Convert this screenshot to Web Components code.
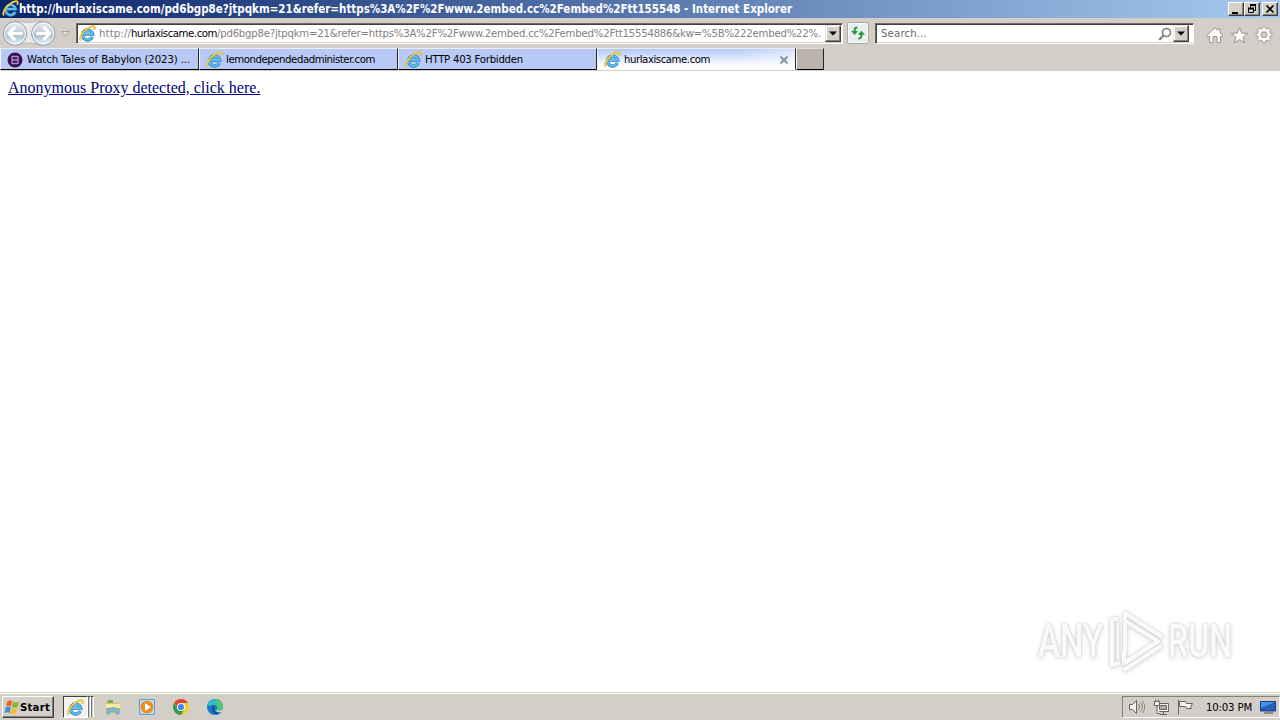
<!DOCTYPE html>
<html lang="en">
<head>
<meta charset="utf-8">
<title>Internet Explorer</title>
<style>
  body { margin: 0; overflow: hidden; }
</style>
</head>
<body>
<browser-desktop></browser-desktop>

<script>
  // Text set to a fixed width, so that labels keep the metrics of the system font
  class FitText extends HTMLElement {
    constructor() {
      super();
      this.attachShadow({ mode: "open" });
      this.shadowRoot.innerHTML = `
        <style>
          :host { display: flex; flex: none; }
          span { flex: none; white-space: pre; }
        </style>
        <span><slot></slot></span>
      `;
    }

    connectedCallback() {
      const width = Number(this.getAttribute("width"));
      const span = this.shadowRoot.querySelector("span");
      const nodes = this.shadowRoot.querySelector("slot").assignedNodes({ flatten: true });
      const text = nodes.map((node) => node.textContent).join("");
      const natural = span.getBoundingClientRect().width;
      const gap = (width - natural) / text.length;
      span.style.letterSpacing = `${gap}px`;
      this.style.width = `${width}px`;
    }
  }

  class IeIcon extends HTMLElement {
    constructor() {
      super();
      this.attachShadow({ mode: "open" });
      this.shadowRoot.innerHTML = `
        <style>
          :host { display: block; width: 17px; height: 17px; flex: none; }
          svg { display: block; width: 100%; height: 100%; }
        </style>
        <svg viewBox="0 0 17 17" fill="none">
          <path d="M13.4 11.8A5.1 5.1 0 1 1 13.700 9.100H5.2" stroke="#2480bd" stroke-width="3.2"/>
          <path d="M13.2 11.8A5 5 0 1 1 13.500 9H5" stroke="#5fbfea" stroke-width="1.900"/>
          <path d="M2.2 15.2C-.7 14 3.7 6.6 8.5 3.5c3-2.2 6.7-3.2 7.2-1.3.2.8-.1 1.7-.6 2.6" stroke="#c89b20" stroke-width="1.900"/>
          <path d="M2.2 15.2C-.7 14 3.7 6.6 8.5 3.5c3-2.2 6.7-3.2 7.2-1.3.2.8-.1 1.7-.6 2.6" stroke="#f7d84b" stroke-width="1.200"/>
        </svg>
      `;
    }
  }

  class WindowButton extends HTMLElement {
    constructor() {
      super();
      this.attachShadow({ mode: "open" });
      this.shadowRoot.innerHTML = `
        <style>
          :host {
            display: flex;
            box-sizing: border-box;
            width: 16px;
            height: 14px;
            align-items: center;
            justify-content: center;
            background: #d4d0c8;
            border: 1px solid;
            border-color: #fff #404040 #404040 #fff;
            box-shadow: inset -1px -1px #808080;
            flex: none;
          }
        </style>
        <slot></slot>
      `;
    }
  }

  class TitleBar extends HTMLElement {
    constructor() {
      super();
      this.attachShadow({ mode: "open" });
      this.shadowRoot.innerHTML = `
        <style>
          :host {
            display: flex;
            box-sizing: border-box;
            height: 18px;
            padding: 0 2px;
            color: #fff;
            font-weight: bold;
            background: linear-gradient(90deg, #0a246a, #a6caf0);
          }
          fit-text { line-height: 18px; font-size: 11.500px; }
          .buttons { display: flex; margin: 2px 0 0 auto; }
          .close { margin-left: 2px; }
          svg { display: block; }
        </style>
        <ie-icon></ie-icon>
        <fit-text width="773"><slot></slot></fit-text>
        <div class="buttons">
          <window-button><svg width="12" height="10"><path d="M2 8h6v2H2z"/></svg></window-button>
          <window-button>
            <svg width="12" height="10" fill="none" stroke="#000"><path d="M4 1h6M4.500 1v3M9.500 1v5.500H8M2 4.500h5.500v4h-5v-4"/><path d="M4 1h6M2 4.500h6" stroke-width="2"/></svg>
          </window-button>
          <window-button class="close"><svg width="12" height="10"><path d="M2.500 1.500l7 7m0-7l-7 7" stroke="#000" stroke-width="1.600"/></svg></window-button>
        </div>
      `;
    }
  }

  class NavButtons extends HTMLElement {
    constructor() {
      super();
      this.attachShadow({ mode: "open" });
      this.shadowRoot.innerHTML = `
        <style>
          :host { display: block; width: 76px; height: 30px; flex: none; }
          svg { display: block; }
        </style>
        <svg width="76" height="30">
          <defs>
            <linearGradient id="glass" x2="0" y2="1">
              <stop offset="0" stop-color="#e8ecf0"/>
              <stop offset=".45" stop-color="#c6d0da"/>
              <stop offset=".55" stop-color="#a9bccb"/>
              <stop offset="1" stop-color="#e4faff"/>
            </linearGradient>
          </defs>
          <path d="M15 3Q29 6 43 3V27Q29 23 15 27z" fill="#ece9e6" stroke="#c0bbb5"/>
          <g fill="url(#glass)" stroke="#8e9caa">
            <circle cx="15" cy="15.500" r="11.700"/>
            <circle cx="43.300" cy="15.500" r="11.700"/>
          </g>
          <g fill="none" stroke="#fff">
            <circle cx="15" cy="15.500" r="10.500"/>
            <circle cx="43.300" cy="15.500" r="10.500"/>
          </g>
          <g fill="none" stroke="#fff" stroke-width="3">
            <path d="M22.500 15.500H9.500M15 9l-6.200 6.500L15 22"/>
            <path d="M36 15.500h13M43.500 9l6.200 6.500-6.200 6.500"/>
          </g>
          <path d="M61.500 13.500h8L65.500 18z" fill="#e2deda" stroke="#aaa5a0"/>
        </svg>
      `;
    }
  }

  class DropButton extends HTMLElement {
    constructor() {
      super();
      this.attachShadow({ mode: "open" });
      this.shadowRoot.innerHTML = `
        <style>
          :host {
            display: flex;
            box-sizing: border-box;
            width: 16px;
            height: 17px;
            align-items: center;
            justify-content: center;
            background: #d4d0c8;
            border: 1px solid;
            border-color: #e8e5e0 #404040 #404040 #e8e5e0;
            box-shadow: inset -1px -1px #808080, inset 1px 1px #fff;
            flex: none;
          }
        </style>
        <svg width="8" height="5"><path d="M0 .500h8L4 4.500z"/></svg>
      `;
    }
  }

  class AddressBar extends HTMLElement {
    constructor() {
      super();
      this.attachShadow({ mode: "open" });
      this.shadowRoot.innerHTML = `
        <style>
          :host {
            display: flex;
            box-sizing: border-box;
            width: 767px;
            height: 21px;
            padding: 0 0 0 2px;
            background: #fff;
            border: 1px solid;
            border-color: #706b68 #fff #fff #706b68;
            box-shadow: inset 1px 1px #404040, inset 0 -1px #d4d0c8;
            color: #85807e;
            flex: none;
          }
          ie-icon { margin: 1px 3px 0 0; }
          fit-text { line-height: 20px; }
          .host { color: #000; }
          drop-button { margin: 1px 1px 0 auto; }
        </style>
        <ie-icon></ie-icon>
        <fit-text width="32">http://</fit-text>
        <fit-text class="host" width="86">hurlaxiscame.com</fit-text>
        <fit-text width="604">/pd6bgp8e?jtpqkm=21&amp;refer=https%3A%2F%2Fwww.2embed.cc%2Fembed%2Ftt15554886&amp;kw=%5B%222embed%22%.</fit-text>
        <drop-button></drop-button>
      `;
    }
  }

  class SearchBox extends HTMLElement {
    constructor() {
      super();
      this.attachShadow({ mode: "open" });
      this.shadowRoot.innerHTML = `
        <style>
          :host {
            display: flex;
            box-sizing: border-box;
            width: 319px;
            height: 21px;
            padding-left: 5px;
            background: #fff;
            border: 1px solid;
            border-color: #706b68 #fff #fff #706b68;
            box-shadow: inset 1px 1px #404040, inset 0 -1px #d4d0c8;
            color: #6c6866;
            flex: none;
          }
          fit-text { line-height: 20px; }
          svg { margin: 3px 0 0 auto; }
          drop-button { margin: 1px 4px 0 0; }
        </style>
        <fit-text width="46">Search...</fit-text>
        <svg width="15" height="15" fill="none" stroke="#85817f">
          <circle cx="8.500" cy="5.500" r="4" stroke-width="1.700"/>
          <path d="M5.500 8.500L1.200 13" stroke-width="2.300"/>
        </svg>
        <drop-button></drop-button>
      `;
    }
  }

  class NavBar extends HTMLElement {
    constructor() {
      super();
      this.attachShadow({ mode: "open" });
      this.shadowRoot.innerHTML = `
        <style>
          :host { display: flex; height: 30px; }
          address-bar, search-box { margin-top: 5px; }
          .refresh {
            display: block;
            box-sizing: border-box;
            width: 22px;
            height: 22px;
            margin: 4px 6px 0 4px;
            background: #e6eef0;
            border: 1px solid #aaa8a4;
            border-radius: 2px;
            box-shadow: inset 0 0 0 1px #f8fafa;
            flex: none;
          }
          .tools { margin: 7px 0 0 11px; flex: none; }
        </style>
        <nav-buttons></nav-buttons>
        <address-bar></address-bar>
        <svg class="refresh" viewBox="0 0 20 20">
          <g fill="#2d9637">
            <path d="M9.500 3.500C6.500 3.500 5.600 5 5.600 8H3l3.700 4 3.300-4H7.600c0-2 .4-2.500 1.900-2.700z"/>
            <path d="M10.200 16.500c3 0 4.200-1.500 4.200-4.700H17l-3.700-4L10 11.800h2.400c0 2-.7 2.700-2.200 2.900z"/>
          </g>
        </svg>
        <search-box></search-box>
        <svg class="tools" width="68" height="22" fill="#fff" stroke="#989491">
          <path d="M1.500 11L10 2.800l2.500 2.400V4h2.600v3.800L18 11l-1.500 1-1-.8v6.300H12v-6H8v6H4.500v-6.300L3 12.200z"/>
          <path d="M34.500 2.500l2.200 5.600 6 .3-4.700 3.800 1.600 5.600-5.100-3.200-5.100 3.200L31 12.200l-4.700-3.800 6-.3z"/>
          <path d="M57.700 2.500h2.600l.6 2.300 1.500.6 2-1.300 1.900 1.900-1.300 2 .6 1.500 2.300.6v2.600l-2.300.6-.6 1.500 1.300 2-1.900 1.900-2-1.300-1.500.6-.6 2.300h-2.600l-.6-2.300-1.500-.6-2 1.300-1.900-1.900 1.300-2-.6-1.500-2.300-.6v-2.600l2.300-.6.6-1.500-1.300-2 1.900-1.900 2 1.300 1.500-.6z" transform="translate(5.900 -.6) scale(.9)"/>
          <circle cx="59" cy="9.700" r="3" fill="#d4cec8"/>
        </svg>
      `;
    }
  }

  class BrowserTab extends HTMLElement {
    constructor() {
      super();
      this.attachShadow({ mode: "open" });
      this.shadowRoot.innerHTML = `
        <style>
          :host {
            display: flex;
            box-sizing: border-box;
            width: 199px;
            height: 22px;
            padding-left: 6px;
            background: #b9c9f5;
            border: 1px solid;
            border-color: #e9eef8 #252525 #000 #f3f5fa;
            flex: none;
          }
          :host([active]) {
            background: linear-gradient(90deg, #fff0 70%, #ffffff80), linear-gradient(#b4c8fa, #fff 85%);
            border-bottom-color: #fff;
          }
          :host([blank]) {
            width: 28px;
            background: #bab2ab;
            border-top-color: #dedad6;
          }
          ::slotted(fit-text) { line-height: 22px; margin-left: 3px; }
          ::slotted(ie-icon) { margin-top: 2px; }
          ::slotted(svg) { display: block; flex: none; }
        </style>
        <slot></slot>
      `;
    }
  }

  class TabStrip extends HTMLElement {
    constructor() {
      super();
      this.attachShadow({ mode: "open" });
      this.shadowRoot.innerHTML = `
        <style>
          :host {
            display: flex;
            box-sizing: border-box;
            height: 23px;
            color: #000;
          }
          .film { margin: 3px 1px 0 0; }
          .x { margin: 6px 0 0 auto; padding-right: 6px; }
        </style>
        <browser-tab>
          <svg class="film" width="16" height="16">
            <circle cx="8" cy="8" r="7.500" fill="#351252"/>
            <path d="M5 4v8M11 4v8M5 8h6M5 4.500h6M5 11.500h6" stroke="#b28bd1" stroke-width="1.300" fill="none"/>
          </svg>
          <fit-text width="163">Watch Tales of Babylon (2023) ...</fit-text>
        </browser-tab>
        <browser-tab><ie-icon></ie-icon><fit-text width="149">lemondependedadminister.com</fit-text></browser-tab>
        <browser-tab><ie-icon></ie-icon><fit-text width="98">HTTP 403 Forbidden</fit-text></browser-tab>
        <browser-tab active>
          <ie-icon></ie-icon><fit-text width="86">hurlaxiscame.com</fit-text>
          <svg class="x" width="10" height="10"><path d="M1.500 1.500l7 7m0-7l-7 7" stroke="#8290a2" stroke-width="1.800"/></svg>
        </browser-tab>
        <browser-tab blank></browser-tab>
      `;
    }
  }

  class PageView extends HTMLElement {
    constructor() {
      super();
      this.attachShadow({ mode: "open" });
      this.shadowRoot.innerHTML = `
        <style>
          :host {
            display: block;
            position: relative;
            box-sizing: border-box;
            padding: 8px;
            background: #fff;
            font: 16px/18px "Liberation Serif", serif;
          }
          a { display: inline-block; color: #000080; text-decoration: underline; }
          any-run { position: absolute; right: 39px; bottom: 13px; }
        </style>
        <a href="#"><slot></slot></a>
        <any-run></any-run>
      `;
    }
  }

  class AnyRun extends HTMLElement {
    constructor() {
      super();
      this.attachShadow({ mode: "open" });
      this.shadowRoot.innerHTML = `
        <style>
          :host {
            display: flex;
            width: 210px;
            height: 76px;
            align-items: center;
            color: #fafafa;
            font: 500 46px/76px "Roboto", sans-serif;
            filter: drop-shadow(0 0 1px #ccc) drop-shadow(0 1px 2px #ddd);
          }
          .word { display: block; width: 66px; height: 76px; flex: none; }
          .word span { display: inline-block; transform-origin: 0 50%; white-space: nowrap; }
          .any { margin-left: 7px; }
          .any span { transform: scaleX(.72); }
          .run { margin-left: 4px; }
          .run span { transform: scaleX(.7); }
          svg { flex: none; }
        </style>
        <div class="word any"><span>ANY</span></div>
        <svg width="60" height="76" fill="none" stroke="#fafafa" stroke-width="4" stroke-linejoin="round">
          <path d="M21 49V10L58 34"/>
          <path d="M21 18L54 38 21 60"/>
          <path d="M14 16H8V62L16 60"/>
          <path d="M14 20v36" stroke-width="2"/>
          <path d="M20 67L58 42"/>
          <path d="M20 48v12l35-22"/>
        </svg>
        <div class="word run"><span>RUN</span></div>
      `;
    }
  }

  class TaskBar extends HTMLElement {
    constructor() {
      super();
      this.attachShadow({ mode: "open" });
      this.shadowRoot.innerHTML = `
        <style>
          :host {
            display: flex;
            box-sizing: border-box;
            height: 28px;
            padding: 3px 0 0 2px;
            background: #d4cec8;
            border-top: 1px solid #d4d0c8;
            box-shadow: inset 0 1px #fff;
          }
          .start {
            display: flex;
            box-sizing: border-box;
            width: 52px;
            height: 22px;
            padding-left: 1px;
            border: 1px solid;
            border-color: #fff #404040 #404040 #fff;
            box-shadow: inset -1px -1px #808080;
            font-weight: bold;
            flex: none;
          }
          .start fit-text { line-height: 21px; }
          .running {
            box-sizing: border-box;
            width: 25px;
            height: 22px;
            margin-left: 9px;
            padding: 2px 3px;
            border: 1px solid;
            border-color: #404040 #fff #fff #404040;
            background: #f4f2f0;
          }
          .stack { width: 3px; height: 21px; border-right: 1px solid #fff; border-top: 1px solid #404040; border-left: 1px solid #77736e; box-sizing: border-box; }
          .launch { display: flex; gap: 16px; margin: 2px 0 0 10px; }
          .tray {
            display: flex;
            box-sizing: border-box;
            width: 158px;
            height: 22px;
            margin-left: auto;
            padding-left: 6px;
            border: 1px solid;
            border-color: #85807c #fff #fff #85807c;
          }
          .tray fit-text { line-height: 21px; margin-left: 11px; }
          .monitor { margin: 3px 0 0 8px; flex: none; }
          svg { display: block; flex: none; }
        </style>
        <div class="start">
          <svg width="16" height="20">
            <path d="M3.500 4Q6 2.500 8.300 4L7 9.500Q4.500 8.200 2 9.500z" fill="#ed642b"/>
            <path d="M9.300 4.500Q12 6 15 4.500l-1.500 5.400Q11 11.300 8 10z" fill="#80b932"/>
            <path d="M1.800 10.500Q4.300 9.200 6.800 10.500L5.400 16Q3 14.500.500 16z" fill="#388cd0"/>
            <path d="M7.800 11Q10.500 12.300 13.200 11l-1.500 5.300q-2.500 1.500-5.300 0z" fill="#f6bc2b"/>
          </svg>
          <fit-text width="30">Start</fit-text>
        </div>
        <div class="running"><ie-icon></ie-icon></div><div class="stack"></div><div class="stack"></div>
        <div class="launch">
          <svg width="18" height="18">
            <path d="M2 3h5l1.500 2H16v10H2z" fill="#e4bf55"/>
            <path d="M4 2h5v3H4z" fill="#6bb36b"/>
            <path d="M2 6h14v4H2z" fill="#fae99c"/>
            <path d="M3 16v-5q6-3 12 0v5h-3v-3H6v3z" fill="#7dc0e5" stroke="#5195be" stroke-width=".6"/>
          </svg>
          <svg width="18" height="18">
            <path d="M1.500 1.500h15v15h-15z" fill="#b6daf3" stroke="#6b9ac2"/>
            <circle cx="9" cy="9" r="6.300" fill="#f28b1b"/>
            <path d="M7 5l6 4-6 4z" fill="#fff"/>
          </svg>
          <svg width="18" height="18">
            <circle cx="9" cy="9" r="8" fill="#f9cd31"/>
            <path d="M2.070 5A8 8 0 0 1 15.930 5H9L5.500 11z" fill="#db4437"/>
            <path d="M2.070 5A8 8 0 0 0 9 17l3.500-6H5.500z" fill="#2b9d58"/>
            <circle cx="9" cy="9" r="4.100" fill="#fff"/>
            <circle cx="9" cy="9" r="3.100" fill="#4285f4"/>
          </svg>
          <svg width="18" height="18">
            <circle cx="9" cy="9" r="8" fill="#1679c5"/>
            <path d="M1.100 8A8 8 0 0 1 17 9c0 3-3 4-6.500 3 2-2 .5-5-2.500-5-3 0-6 1-6.900 1z" fill="#36bdc2"/>
            <path d="M10 1.100A8 8 0 0 1 17 9c0 3-3 4-6.500 3 1-1 1.200-2 .7-3z" fill="#53c778"/>
            <path d="M8 7c-3 1-3 7 2 9 2 .5 4-.5 5.500-2-4 1-8-1-7-5z" fill="#115097"/>
            <path d="M10.500 12c2 1 5 .7 6.500-1l-1.500 3c-3 1-5 .2-6.500-2z" fill="#d4cec8"/>
          </svg>
        </div>
        <div class="tray">
          <svg width="66" height="20" fill="#f4f2f0" stroke="#69645f">
            <path d="M.500 7.500h3l4-4v13l-4-4h-3z"/>
            <path d="M9.500 7q2 3 0 6M11.500 5.500q3.500 4.500 0 9M13.500 4q4.500 6 0 12" fill="none" stroke="#8b8681"/>
            <path d="M28.500 6.500h11v8h-11zM31 17.500h7M34.500 15v2"/>
            <path d="M30.500 8.500h7v4h-7z" fill="#b0aca7"/>
            <path d="M25.500 4.500h5v4h-5zM26.500 2.500v2M29.500 2.500v2M28 8.500v8h3" />
            <path d="M49.500 3v14.500" fill="none"/>
            <path d="M50.500 4.500h6l1 2h6l-2 4 1 1h-5l-1-2h-6z"/>
          </svg>
          <fit-text width="46">10:03 PM</fit-text>
          <svg class="monitor" width="16" height="15">
            <path d="M.500 1.500h15v9.500H.500z" fill="#2461bd" stroke="#153f80"/>
            <path d="M1 2h14L1 8z" fill="#4990df"/>
            <path d="M4 13h9" stroke="#777" stroke-width="1.500"/>
          </svg>
        </div>
      `;
    }
  }

  class BrowserDesktop extends HTMLElement {
    constructor() {
      super();
      this.attachShadow({ mode: "open" });
      this.shadowRoot.innerHTML = `
        <style>
          :host {
            display: grid;
            grid-template-rows: 18px 30px 23px 1fr 28px;
            width: 1280px;
            height: 720px;
            overflow: hidden;
            background: #d4cec8;
            color: #000;
            font: 11.300px "DejaVu Sans Condensed", "DejaVu Sans", sans-serif;
            font-stretch: condensed;
          }
        </style>
        <title-bar>http://hurlaxiscame.com/pd6bgp8e?jtpqkm=21&amp;refer=https%3A%2F%2Fwww.2embed.cc%2Fembed%2Ftt155548 - Internet Explorer</title-bar>
        <nav-bar></nav-bar>
        <tab-strip></tab-strip>
        <page-view>Anonymous Proxy detected, click here.</page-view>
        <task-bar></task-bar>
      `;
    }
  }

  customElements.define("ie-icon", IeIcon);
  customElements.define("window-button", WindowButton);
  customElements.define("title-bar", TitleBar);
  customElements.define("nav-buttons", NavButtons);
  customElements.define("drop-button", DropButton);
  customElements.define("address-bar", AddressBar);
  customElements.define("search-box", SearchBox);
  customElements.define("nav-bar", NavBar);
  customElements.define("browser-tab", BrowserTab);
  customElements.define("tab-strip", TabStrip);
  customElements.define("any-run", AnyRun);
  customElements.define("page-view", PageView);
  customElements.define("task-bar", TaskBar);
  customElements.define("browser-desktop", BrowserDesktop);
  // Last: it measures its text, so every style around it must be in place
  customElements.define("fit-text", FitText);
</script>
</body>
</html>
